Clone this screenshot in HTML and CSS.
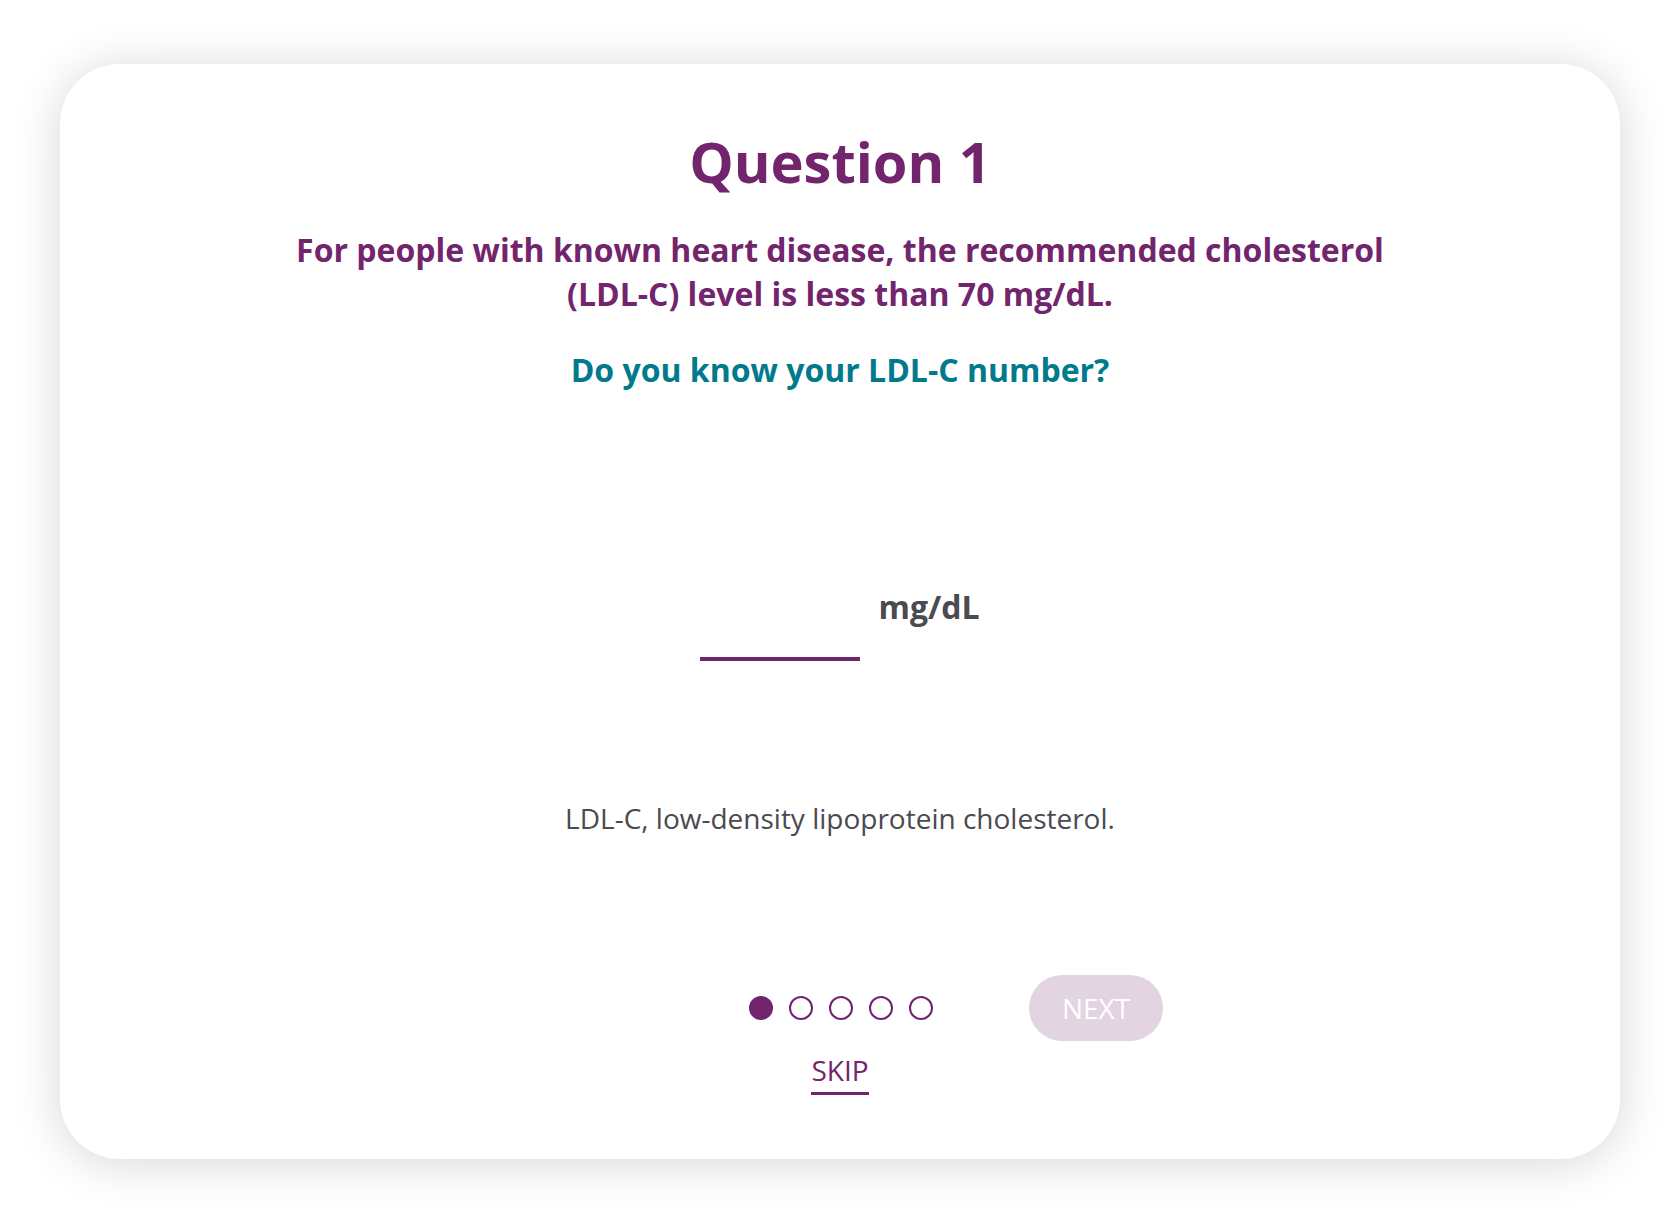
FILE: index.html
```html
<!DOCTYPE html>
<html lang="en">
<head>
    <meta charset="UTF-8">
    <meta name="viewport" content="width=device-width, initial-scale=1.0">
    <title>Question 1</title>
    <link rel="stylesheet" href="styles.css">
</head>
<body>
    <div class="quiz-card">
        <h1 class="quiz-title">Question 1</h1>
        <p class="quiz-intro">For people with known heart disease, the recommended cholesterol<br>(LDL-C) level is less than 70 mg/dL.</p>
        <p class="quiz-question">Do you know your LDL-C number?</p>

        <div class="answer-row">
            <input type="text" class="answer-input" aria-label="LDL-C value">
            <span class="answer-unit">mg/dL</span>
        </div>

        <p class="footnote">LDL-C, low-density lipoprotein cholesterol.</p>

        <div class="nav-row">
            <div class="progress-dots">
                <span class="dot active"></span>
                <span class="dot"></span>
                <span class="dot"></span>
                <span class="dot"></span>
                <span class="dot"></span>
            </div>
            <button type="button" class="next-btn" disabled>NEXT</button>
        </div>
        <div class="skip-wrap">
            <a href="#" class="skip-link">SKIP</a>
        </div>
    </div>
</body>
</html>
```

FILE: styles.css
```css
body {
    margin: 0;
    background-color: #fff;
    font-family: "Open Sans", "Noto Sans", Arial, sans-serif;
}

.quiz-card {
    margin: 64px 60px;
    padding: 61px 40px 64px;
    background-color: #fff;
    border-radius: 60px;
    box-shadow: 0 4px 48px rgba(0, 0, 0, 0.16);
    text-align: center;
}

.quiz-title {
    margin: 0;
    font-size: 56px;
    line-height: 72px;
    font-weight: 700;
    color: #72256d;
}

.quiz-intro,
.quiz-question {
    margin: 31px 0 0;
    font-size: 32px;
    line-height: 44px;
    font-weight: 700;
}

.quiz-intro {
    color: #72256d;
}

.quiz-question {
    margin-top: 32px;
    color: #007a8c;
}

.answer-row {
    display: flex;
    justify-content: center;
    align-items: flex-start;
    gap: 18px;
    margin-top: 193px;
}

.answer-input {
    box-sizing: border-box;
    width: 160px;
    height: 76px;
    padding: 0 8px;
    border: none;
    border-bottom: 4px solid #72256d;
    font-family: inherit;
    font-size: 30px;
    color: #4a4a50;
    outline: none;
    background: transparent;
}

.answer-unit {
    font-size: 32px;
    line-height: 44px;
    font-weight: 700;
    color: #4a4a50;
}

.footnote {
    margin: 139px 0 0;
    font-size: 28px;
    line-height: 36px;
    color: #4a4a50;
}

.nav-row {
    display: flex;
    justify-content: flex-end;
    align-items: center;
    gap: 96px;
    width: 646px;
    margin: 139px auto 0;
}

.progress-dots {
    display: flex;
    gap: 16px;
}

.dot {
    box-sizing: border-box;
    width: 24px;
    height: 24px;
    border: 2px solid #72256d;
    border-radius: 50%;
}

.dot.active {
    background-color: #72256d;
}

.next-btn {
    width: 134px;
    height: 66px;
    padding: 0;
    border: none;
    border-radius: 33px;
    background-color: #e3d4e1;
    color: #fff;
    font-family: inherit;
    font-size: 28px;
}

.skip-wrap {
    margin-top: 12px;
}

.skip-link {
    display: inline-block;
    padding-bottom: 5px;
    border-bottom: 3px solid #72256d;
    font-size: 28px;
    line-height: 34px;
    color: #72256d;
    text-decoration: none;
}
```
